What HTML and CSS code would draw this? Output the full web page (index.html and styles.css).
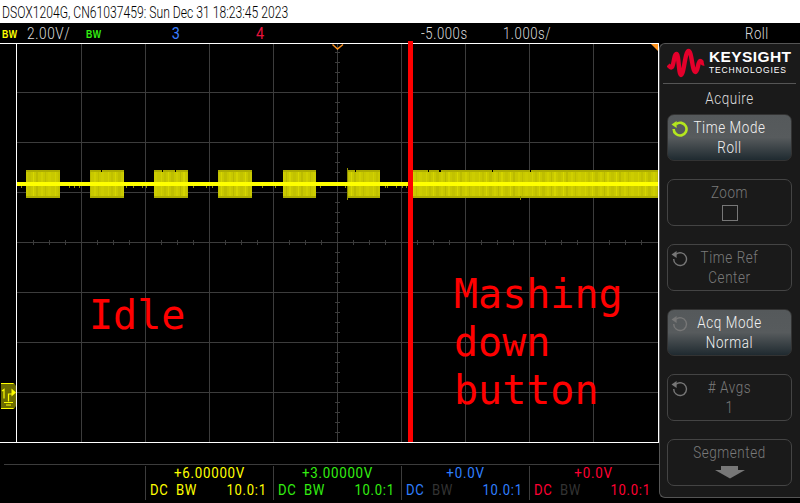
FILE: index.html
```html
<!DOCTYPE html>
<html lang="en">
<head>
    <meta charset="UTF-8">
    <title>DSOX1204G capture</title>
    <link rel="stylesheet" href="styles.css">
</head>
<body>
    <svg class="defs" width="0" height="0">
        <defs>
            <symbol id="knob" viewBox="0 0 18 18">
                <path d="M5 5.2 A6.4 6.4 0 1 1 2.7 10" fill="none" stroke="currentColor" stroke-width="var(--knob-w)"/>
                <path d="M0.5 5.6 L5.6 2 L5.6 9 Z" fill="currentColor"/>
            </symbol>
            <pattern id="streaks" width="53" height="10" patternUnits="userSpaceOnUse">
                <rect width="53" height="10" fill="#c8c800"/>
                <rect x="2" width="1" height="10" fill="#d2d200"/>
                <rect x="5" width="2" height="10" fill="#c0c000"/>
                <rect x="9" width="1" height="10" fill="#d6d600"/>
                <rect x="12" width="3" height="10" fill="#bebe00"/>
                <rect x="17" width="2" height="10" fill="#cfcf00"/>
                <rect x="21" width="1" height="10" fill="#b9b900"/>
                <rect x="24" width="2" height="10" fill="#d4d400"/>
                <rect x="28" width="3" height="10" fill="#c2c200"/>
                <rect x="33" width="1" height="10" fill="#d8d800"/>
                <rect x="36" width="2" height="10" fill="#bbbb00"/>
                <rect x="41" width="2" height="10" fill="#d0d000"/>
                <rect x="45" width="1" height="10" fill="#bdbd00"/>
                <rect x="48" width="3" height="10" fill="#cdcd00"/>
            </pattern>
        </defs>
    </svg>

    <div class="title"><span class="title-text">DSOX1204G, CN61037459: Sun Dec 31 18:23:45 2023</span></div>

    <div class="status">
        <div class="chan chan-1"><span class="bw">BW</span><span class="scale">2.00V/</span></div>
        <div class="chan chan-2"><span class="bw">BW</span></div>
        <div class="chan chan-3">3</div>
        <div class="chan chan-4">4</div>
        <div class="delay">-5.000s</div>
        <div class="timebase">1.000s/</div>
        <div class="mode">Roll</div>
    </div>

    <div class="main">
        <div class="left">
            <div class="scope">
                <svg class="ground" width="15" height="26" viewBox="0 0 15 26">
                    <path d="M0 0H13L15 3V23L13 26H0Z" fill="#6b6b00"/>
                    <path d="M0 .5H12.5M0 25.5H12.5" stroke="#ffff00"/>
                    <path d="M1 8L3 6.5V15.5M7.5 18.5V11H11M3 19.5H12M5 22H10" fill="none" stroke="#ffff00" stroke-width="1.2"/>
                    <path d="M10.5 5.5L15 9.5L10.5 13.5Z" fill="#ffff00"/>
                </svg>
                <div class="plot">
                    <svg class="graticule" width="641" height="398" viewBox="17 44 641 398">
                        <path class="grid" d="M81.5 44V442M145.5 44V442M209.5 44V442M273.5 44V442M337.5 44V442M401.5 44V442M465.5 44V442M529.5 44V442M593.5 44V442M17 92.5H658M17 142.5H658M17 192.5H658M17 242.5H658M17 292.5H658M17 342.5H658M17 392.5H658"/>
                        <path class="hticks" d="M33 240h1v5h-1zM49 240h1v5h-1zM65 240h1v5h-1zM97 240h1v5h-1zM113 240h1v5h-1zM129 240h1v5h-1zM161 240h1v5h-1zM177 240h1v5h-1zM193 240h1v5h-1zM225 240h1v5h-1zM241 240h1v5h-1zM257 240h1v5h-1zM289 240h1v5h-1zM305 240h1v5h-1zM321 240h1v5h-1zM353 240h1v5h-1zM369 240h1v5h-1zM385 240h1v5h-1zM417 240h1v5h-1zM433 240h1v5h-1zM449 240h1v5h-1zM481 240h1v5h-1zM497 240h1v5h-1zM513 240h1v5h-1zM545 240h1v5h-1zM561 240h1v5h-1zM577 240h1v5h-1zM609 240h1v5h-1zM625 240h1v5h-1zM641 240h1v5h-1z"/>
                        <path class="vticks" d="M335 52.5h5M335 62.5h5M335 72.5h5M335 82.5h5M335 102.5h5M335 112.5h5M335 122.5h5M335 132.5h5M335 152.5h5M335 162.5h5M335 172.5h5M335 182.5h5M335 202.5h5M335 212.5h5M335 222.5h5M335 232.5h5M335 252.5h5M335 262.5h5M335 272.5h5M335 282.5h5M335 302.5h5M335 312.5h5M335 322.5h5M335 332.5h5M335 352.5h5M335 362.5h5M335 372.5h5M335 382.5h5M335 402.5h5M335 412.5h5M335 422.5h5M335 432.5h5"/>

                        <path class="burst-edge" d="M26 170h34v28h-34zM90 170h34v28h-34zM154 170h34v28h-34zM218 170h34v28h-34zM283 170h33v28h-33zM347 170h33v28h-33zM413 170h245v28h-245z"/>
                        <path class="burst" d="M26 172h34v24h-34zM90 172h34v24h-34zM154 172h34v24h-34zM218 172h34v24h-34zM283 172h33v24h-33zM347 172h33v24h-33zM413 172h245v24h-245z"/>
                        <path class="notch" d="M101 170h1v2h-1zM162 170h1v2h-1zM175 170h1v2h-1zM355 170h1v2h-1zM428 170h1v2h-1zM439 170h2v2h-2zM492 170h1v2h-1zM530 170h1v2h-1z"/>
                        <path class="spike" d="M347.5 168V200M520.5 196V200M21.5 186V188M69.5 186V188M74.5 186V188M79.5 186V188M126.5 186V188M133.5 186V188M142.5 186V188M146.5 186V188M193.5 186V188M206.5 186V188M212.5 186V188M262.5 186V188M275.5 186V188M320.5 186V188M345.5 186V188M385.5 186V188M387.5 186V188M396.5 186V188M402.5 186V188M406.5 186V188"/>
                        <rect class="trace" x="17" y="182" width="641" height="4"/>

                        <path class="marker" d="M332.5 44.5L337.5 49L343 44.5" fill="none"/>
                        <path class="corner" d="M651 44H658V51Z"/>
                    </svg>
                    <div class="note note-idle">Idle</div>
                    <div class="note note-mash">Mashing<br>down<br>button</div>
                </div>
                <div class="split"></div>
            </div>

            <div class="readouts">
                <div class="cell cell-1">
                    <div class="offset">+6.00000V</div>
                    <div class="info"><span class="dc">DC</span><span class="bwl">BW</span><span class="ratio">10.0:1</span></div>
                </div>
                <div class="cell cell-2">
                    <div class="offset">+3.00000V</div>
                    <div class="info"><span class="dc">DC</span><span class="bwl">BW</span><span class="ratio">10.0:1</span></div>
                </div>
                <div class="cell cell-3">
                    <div class="offset">+0.0V</div>
                    <div class="info"><span class="dc">DC</span><span class="bwl off">BW</span><span class="ratio">10.0:1</span></div>
                </div>
                <div class="cell cell-4">
                    <div class="offset">+0.0V</div>
                    <div class="info"><span class="dc">DC</span><span class="bwl off">BW</span><span class="ratio">10.0:1</span></div>
                </div>
            </div>
        </div>

        <div class="softkeys">
            <div class="logo">
                <svg class="logo-wave" width="38" height="31" viewBox="0 0 38 31">
                    <path d="M1 17 C3 19 4 20 5 19 C7 16 7 6 9.5 6 C12 6 11.5 27 14 27 C17 27 18 3 21.5 3 C25 3 25 24 28.5 24 C31 24 31 13 33 13 C35 13 35 16 37 15.5" fill="none" stroke="#e4002b" stroke-width="4.4"/>
                </svg>
                <div class="logo-text">
                    <div class="logo-name">KEYSIGHT</div>
                    <div class="logo-sub">TECHNOLOGIES</div>
                </div>
            </div>
            <div class="menu-title">Acquire</div>

            <div class="key active">
                <svg class="knob knob-on" width="18" height="18"><use href="#knob"/></svg>
                <div class="label">Time Mode</div>
                <div class="label">Roll</div>
            </div>
            <div class="key">
                <div class="label">Zoom</div>
                <div class="checkbox"></div>
            </div>
            <div class="key">
                <svg class="knob" width="18" height="18"><use href="#knob"/></svg>
                <div class="label">Time Ref</div>
                <div class="label">Center</div>
            </div>
            <div class="key active">
                <svg class="knob knob-dim" width="18" height="18"><use href="#knob"/></svg>
                <div class="label">Acq Mode</div>
                <div class="label">Normal</div>
            </div>
            <div class="key">
                <svg class="knob" width="18" height="18"><use href="#knob"/></svg>
                <div class="label"># Avgs</div>
                <div class="label">1</div>
            </div>
            <div class="key">
                <div class="label">Segmented</div>
                <svg class="more" width="30" height="13" viewBox="0 0 30 13"><path d="M6 0H23V4H30L15 12.5L0 4H6Z"/></svg>
            </div>
        </div>
    </div>
</body>
</html>
```

FILE: styles.css
```css
body {
    margin: 0;
    width: 800px;
    height: 503px;
    overflow: hidden;
    background-color: #000;
    color: #ddd;
    font-family: Roboto, "Liberation Sans", sans-serif;
    font-weight: 300;
    font-size: 16px;
}
.defs {
    position: absolute;
}

/* Top strips */
.title {
    height: 23px;
    line-height: 24px;
    padding-left: 2px;
    background-color: #fff;
    color: #000;
    font-size: 17px;
    white-space: nowrap;
}
.title-text {
    display: inline-block;
    transform: scaleX(0.715);
    transform-origin: left;
}
.status {
    display: flex;
    height: 20px;
    line-height: 21px;
    padding-left: 2px;
    letter-spacing: 0.7px;
    white-space: nowrap;
}
.chan {
    width: 85px;
}
.chan-1 {
    width: 84px;
}
.chan-3 {
    color: #3a7fff;
    text-indent: 1px;
}
.chan-4 {
    color: #e8123c;
}
.chan-3, .chan-4 {
    font-size: 17px;
    font-weight: 400;
    transform: scaleX(0.85);
    transform-origin: left;
}
.bw {
    display: inline-block;
    width: 25px;
    font-family: "Liberation Sans", sans-serif;
    font-size: 11px;
    font-weight: bold;
    letter-spacing: 0.5px;
    vertical-align: 1px;
    transform: scaleX(0.8);
    transform-origin: left;
}
.scale {
    display: inline-block;
    transform: scaleX(0.85);
    transform-origin: left;
}
.chan-1 .bw {
    color: #ffff00;
}
.chan-2 .bw {
    color: #33ee11;
}
.delay, .timebase, .mode {
    transform: scaleX(0.82);
    transform-origin: left;
}
.delay {
    width: 82px;
    margin-left: 80px;
}
.timebase {
    width: 242px;
}

/* Waveform area */
.main {
    display: flex;
    height: 460px;
}
.left {
    width: 659px;
}
.scope {
    position: relative;
    display: flex;
    height: 398px;
    border-top: 1px solid #fff;
    border-bottom: 1px solid #fff;
    border-right: 1px solid #fff;
}
.plot {
    position: relative;
    width: 641px;
    height: 398px;
    margin-left: 16px;
    border-left: 1px solid #fff;
}
.ground {
    position: absolute;
    left: 1px;
    top: 339px;
}
.graticule {
    display: block;
}
.grid {
    fill: none;
    stroke: #3c3c3c;
    shape-rendering: crispEdges;
}
.hticks {
    fill: #3c3c3c;
    shape-rendering: crispEdges;
}
.vticks {
    stroke: #3c3c3c;
    shape-rendering: crispEdges;
}
.burst-edge {
    fill: #adad00;
}
.burst {
    fill: url(#streaks);
}
.notch {
    fill: #000;
}
.spike {
    stroke: #8e8e00;
    shape-rendering: crispEdges;
}
.trace {
    fill: #ffff00;
}
.marker {
    stroke: #ff9420;
    stroke-width: 1.4;
}
.corner {
    fill: #ff9420;
}
.note {
    position: absolute;
    color: #ff0000;
    font-family: "DejaVu Sans Mono", monospace;
    font-weight: 400;
    font-size: 40px;
    line-height: 48px;
}
.note-idle {
    left: 72px;
    top: 247px;
}
.note-mash {
    left: 437px;
    top: 226px;
}
.split {
    position: absolute;
    left: 408px;
    top: -3px;
    width: 5px;
    height: 401px;
    background-color: #ff0000;
}

/* Channel readouts */
.readouts {
    display: flex;
    margin: 21px 0 0 4px;
    padding: 1px 0 0 141px;
    border-top: 1px solid #3c3c3c;
    width: 514px;
}
.cell {
    width: 128px;
    height: 34px;
    border-left: 1px solid #3c3c3c;
    box-sizing: border-box;
    font-size: 14.5px;
    font-weight: 400;
    line-height: 16px;
    letter-spacing: 0.8px;
}
.offset {
    text-align: center;
    transform: scaleX(0.92);
}
.info {
    display: flex;
    padding: 1px 6px 0 4px;
}
.info span {
    transform: scaleX(0.9);
    transform-origin: left;
}
.dc {
    width: 26px;
}
.info .ratio {
    margin-left: auto;
    transform-origin: right;
}
.off {
    color: #333;
}
.cell-1 {
    color: #ffff00;
}
.cell-2 {
    color: #33ee11;
}
.cell-3 {
    color: #2f7fff;
}
.cell-4 {
    color: #ff0033;
}

/* Softkey panel */
.softkeys {
    box-sizing: border-box;
    width: 141px;
    height: 455px;
    padding: 0 8px 0 7px;
    background-color: #1a1a1a;
    border-top: 1px solid #555;
    border-bottom: 1px solid #555;
    border-left: 1px solid #555;
    border-radius: 6px 0 0 6px;
}
.logo {
    display: flex;
    gap: 4px;
    width: 133px;
    height: 40px;
    margin: 0 -4px;
    padding: 4px 0 0 4px;
    box-sizing: border-box;
    border-bottom: 1px solid #555;
}
.logo-wave {
    flex: none;
}
.logo-text {
    color: #fff;
    font-family: "Liberation Sans", sans-serif;
    font-weight: 400;
}
.logo-name {
    font-size: 15.5px;
    font-weight: bold;
    line-height: 16px;
    letter-spacing: 0.4px;
    margin-top: 1px;
}
.logo-sub {
    font-size: 8.5px;
    line-height: 10px;
    letter-spacing: 0.85px;
}
.menu-title {
    height: 30px;
    line-height: 30px;
    text-align: center;
    letter-spacing: 0.7px;
    transform: scaleX(0.84);
}
.key {
    position: relative;
    box-sizing: border-box;
    height: 47px;
    margin-bottom: 18px;
    padding-top: 3px;
    border: 1px solid #444;
    border-radius: 7px;
    color: #7a7a7a;
    line-height: 20px;
    text-align: center;
    letter-spacing: 0.7px;
}
.key.active {
    border-color: #333;
    background: linear-gradient(#55595b 0%, #575b5d 50%, #1f2a30 100%);
    color: #f2f2f2;
}
.label {
    transform: scaleX(0.84);
}
.knob {
    --knob-w: 1.4;
    position: absolute;
    left: 3px;
    top: 4px;
    color: #777;
}
.knob-on {
    --knob-w: 2.6;
    color: #b4e61e;
}
.knob-dim {
    color: #777;
}
.checkbox {
    width: 14px;
    height: 14px;
    margin: 2px auto 0;
    border: 1px solid #777;
}
.more {
    display: block;
    margin: 3px auto 0;
    fill: #777;
}
```
